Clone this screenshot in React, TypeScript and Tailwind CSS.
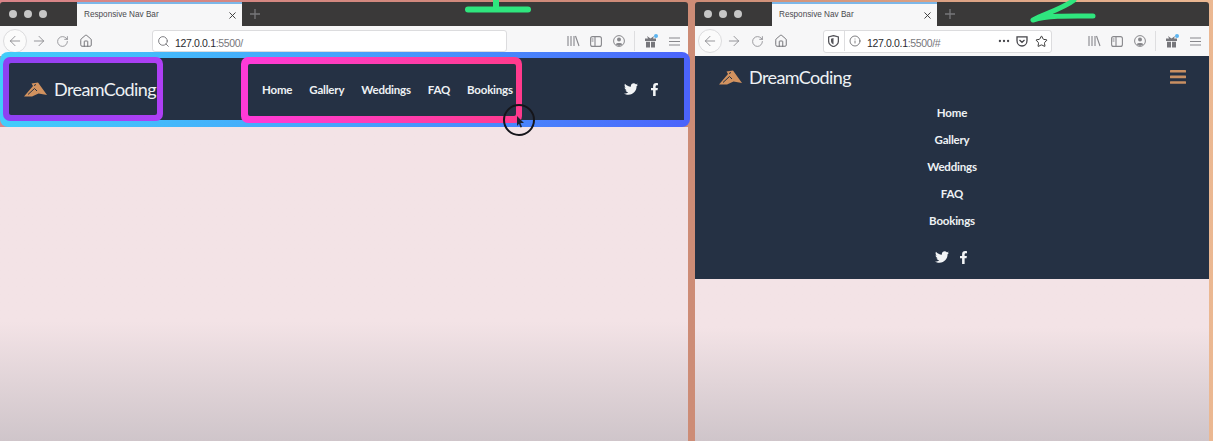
import { FaFacebookF, FaTwitter } from 'react-icons/fa';
import { ArrowLeft, ArrowRight, Home, Info, MoreHorizontal, RotateCw, Search, Star, X } from 'lucide-react';

const links = ['Home', 'Gallery', 'Weddings', 'FAQ', 'Bookings'];

const Logo = () => (
  <svg width="23" height="15" viewBox="0 0 23 15" className="shrink-0">
    <path d="M0 14.5 L9 4 L7.5 1.5 L14 0.5 L23 13 L14.5 11.5 L8 14.5 Z" fill="#d2925f" />
    <path d="M4 12.5 L10.5 6.5 L13 9 M10 3.5 L12 2.5" fill="none" stroke="#253144" strokeWidth="1" />
  </svg>
);

const TabStrip = () => (
  <div className="flex h-6 shrink-0 items-stretch rounded-t-[3px] bg-[#3a3939]">
    <div className="flex w-[77px] items-center gap-[7px] pl-[9px]">
      <span className="h-2 w-2 rounded-full bg-[#c6c6c6]" />
      <span className="h-2 w-2 rounded-full bg-[#c6c6c6]" />
      <span className="h-2 w-2 rounded-full bg-[#c6c6c6]" />
    </div>
    <div className="flex w-[165px] items-center justify-between border-t-2 border-[#7db7e8] bg-[#f7f7f8] pl-[7px] pr-[4px] font-['Liberation_Sans',sans-serif] text-[8.2px] text-[#4a4a4f]">
      <span>Responsive Nav Bar</span>
      <X size={11} strokeWidth={2} className="text-[#333]" />
    </div>
    <div className="flex items-center pl-[8px] text-[#77777a]">
      <svg width="10" height="10" viewBox="0 0 10 10" stroke="currentColor" strokeWidth="1.3">
        <path d="M5 0V10M0 5H10" />
      </svg>
    </div>
  </div>
);

const NavButtons = () => (
  <div className="flex items-center text-[#88888c]">
    <div className="ml-[3px] flex h-[24px] w-[24px] items-center justify-center rounded-full border border-[#dcdcde] bg-[#fbfbfb]">
      <ArrowLeft size={16} strokeWidth={1.3} />
    </div>
    <ArrowRight size={16} strokeWidth={1.3} className="ml-[4px]" />
    <RotateCw size={13} strokeWidth={1.5} className="ml-[9px]" />
    <Home size={14} strokeWidth={1.5} className="ml-[10px] text-[#66666a]" />
  </div>
);

const RightTools = () => (
  <div className="ml-auto flex items-center text-[#88888c]">
    <svg width="13" height="12" viewBox="0 0 13 12" fill="none" stroke="currentColor" strokeWidth="1.1">
      <path d="M1 1V11M4 1V11M7 1V11M8.5 1L12 11" />
    </svg>
    <svg width="12" height="11" viewBox="0 0 12 11" fill="none" stroke="currentColor" strokeWidth="1.1" className="ml-[10px]">
      <rect x="0.6" y="0.6" width="10.8" height="9.8" rx="2" />
      <path d="M5 1V10M1.5 3H3.5M1.5 5H3.5" />
    </svg>
    <svg width="12" height="12" viewBox="0 0 12 12" className="ml-[11px]">
      <circle cx="6" cy="6" r="5.4" fill="none" stroke="currentColor" strokeWidth="1" />
      <circle cx="6" cy="4.6" r="2" fill="currentColor" />
      <path d="M2.6 9.4C3.6 7.6 8.4 7.6 9.4 9.4L6 11Z" fill="currentColor" />
    </svg>
    <span className="ml-[9px] h-[20px] w-px bg-[#dedee0]" />
    <div className="relative ml-[9px]">
      <svg width="13" height="13" viewBox="0 0 13 13" fill="#77777c">
        <path d="M1 3.5H12V6H1ZM2 6.8H6V12.5H2ZM7 6.8H11V12.5H7ZM3 1L6.5 3.4L4 3.4ZM10 1L6.5 3.4L9 3.4Z" />
      </svg>
      <span className="absolute -right-[1px] -top-[1px] h-[4px] w-[4px] rounded-full bg-[#5cb4f0]" />
    </div>
    <svg width="11" height="9" viewBox="0 0 11 9" stroke="currentColor" strokeWidth="1.1" className="ml-[12px] mr-[8px]">
      <path d="M0 1H11M0 4.5H11M0 8H11" />
    </svg>
  </div>
);

const Url = ({ hash }: { hash?: boolean }) => (
  <span className="font-['Liberation_Sans',sans-serif] text-[10.5px] tracking-[-0.35px] text-[#2b2b30]">
    127.0.0.1<span className="text-[#77777c]">:5500/{hash ? '#' : ''}</span>
  </span>
);

const Twitter = () => <FaTwitter size={14} className="text-[#f2f4f6]" />;
const Facebook = () => <FaFacebookF size={13} className="text-[#f2f4f6]" />;

export default function App() {
  return (
    <div
      className="flex h-[441px] w-[1213px] overflow-hidden bg-gradient-to-r from-[#d98488] via-[#cd8c76] via-[57%] to-[#ebb892] pt-[2px] text-[#eef1f4]"
      style={{ fontFamily: 'Lato, sans-serif' }}
    >
      {/* Left window */}
      <div className="relative flex w-[688px] shrink-0 flex-col">
        <TabStrip />
        <div className="flex h-[30px] shrink-0 items-center bg-[#f7f7f8]">
          <NavButtons />
          <div className="ml-[59px] flex h-[22px] w-[355px] items-center rounded-[3px] border border-[#dcdcde] bg-white pl-[4px]">
            <Search size={13} strokeWidth={1.6} className="text-[#6d6d72]" />
            <span className="ml-[5px]"><Url /></span>
          </div>
          <RightTools />
        </div>

        {/* Nav with annotation frames */}
        <div className="relative z-10 -mt-[4px] w-[690px] shrink-0 rounded-[8px] bg-gradient-to-r from-[#42cdfa] via-[#46a2fb] to-[#4b63fb] pb-[7px] pl-[7px] pr-[6px] pt-[6px]">
          <div className="flex h-[62px] items-start bg-[#253144]">
            <div className="-ml-[4px] -mt-[1px] h-[64px] w-[160px] shrink-0 rounded-[7px] bg-gradient-to-r from-[#8d41f2] to-[#ae3ff5] p-[6px]">
              <div className="flex h-full items-center gap-[7px] rounded-[2px] bg-[#253144] pl-[15px]">
                <Logo />
                <span className="text-[18px] leading-none tracking-[-0.6px]">DreamCoding</span>
              </div>
            </div>
            <div className="-mt-[1px] ml-[78px] h-[66px] w-[281px] shrink-0 rounded-[7px] bg-gradient-to-r from-[#ff3ad8] to-[#ff3a8c] p-[7px] pr-[6px]">
              <div className="flex h-full items-center gap-[17px] rounded-[2px] bg-[#253144] pl-[14px] text-[11.5px] font-bold tracking-[-0.2px]">
                {links.map(link => (
                  <span key={link}>{link}</span>
                ))}
              </div>
            </div>
            <div className="ml-[102px] flex h-[62px] items-center gap-[10px]">
              <Twitter />
              <Facebook />
            </div>
          </div>
        </div>

        <div className="flex-1 bg-gradient-to-b from-[#f3e3e6] from-[62%] to-[#cfc5ca]" />

        {/* Cursor highlight */}
        <div className="absolute left-[503px] top-[102px] z-20 flex h-[32px] w-[32px] items-center justify-center rounded-full border-2 border-[#15151a]">
          <svg width="9" height="12" viewBox="0 0 9 12" className="ml-[3px] mt-[3px]">
            <path d="M1 0L8 7H4.5L6 11L4.5 11.5L3 7.8L1 10Z" fill="#1c2330" />
          </svg>
        </div>

        {/* Hand-drawn mark */}
        <svg width="70" height="16" viewBox="0 0 70 16" className="absolute left-[463px] -top-[2px] z-20" fill="none" stroke="#2fe67e" strokeLinecap="round" strokeWidth="6">
          <path d="M33 0V9M5 9.5H65" />
        </svg>
      </div>

      {/* Right window */}
      <div className="relative ml-[7px] flex w-[514px] shrink-0 flex-col">
        <TabStrip />
        <div className="flex h-[30px] shrink-0 items-center bg-[#f7f7f8]">
          <NavButtons />
          <div className="ml-[35px] flex h-[23px] w-[229px] items-center rounded-[3px] border border-[#dcdcde] bg-white pl-[4px] text-[#55555a]">
            <svg width="11" height="12" viewBox="0 0 11 12">
              <path d="M5.5 0.6L10.4 2V6C10.4 9 8 10.8 5.5 11.6C3 10.8 0.6 9 0.6 6V2Z" fill="none" stroke="currentColor" strokeWidth="1.3" />
              <path d="M5.5 3V9.5C3.8 8.8 3 7.5 3 6V3.8Z" fill="currentColor" />
            </svg>
            <span className="ml-[5px] h-[20px] w-px bg-[#dedee0]" />
            <Info size={12} strokeWidth={1.5} className="ml-[4px]" />
            <span className="ml-[6px]"><Url hash /></span>
            <div className="ml-auto flex items-center pr-[3px] text-[#45454a]">
              <MoreHorizontal size={14} strokeWidth={2} />
              <svg width="12" height="11" viewBox="0 0 12 11" fill="none" stroke="currentColor" strokeWidth="1.3" className="ml-[5px]">
                <path d="M1 0.8H11V4.5C11 8 8.5 10 6 10C3.5 10 1 8 1 4.5ZM3.5 4L6 6.3L8.5 4" />
              </svg>
              <Star size={13} strokeWidth={1.8} className="ml-[7px] text-[#333]" />
            </div>
          </div>
          <RightTools />
        </div>

        <div className="flex h-[223px] shrink-0 flex-col items-center bg-[#253144]">
          <div className="flex h-[42px] w-full shrink-0 items-center justify-between pl-[24px] pr-[23px]">
            <div className="flex items-center gap-[7px]">
              <Logo />
              <span className="text-[18px] leading-none tracking-[-0.6px]">DreamCoding</span>
            </div>
            <svg width="16" height="14" viewBox="0 0 16 14" fill="#c98f62">
              <rect width="16" height="2.6" rx="0.5" />
              <rect y="5.6" width="16" height="2.6" rx="0.5" />
              <rect y="11.2" width="16" height="2.6" rx="0.5" />
            </svg>
          </div>
          <div className="mt-[6px] flex flex-col items-center gap-[10px] text-[11.5px] font-bold leading-[17px] tracking-[-0.2px]">
            {links.map(link => (
              <span key={link}>{link}</span>
            ))}
          </div>
          <div className="mt-[21px] flex items-center gap-[8px]">
            <Twitter />
            <Facebook />
          </div>
        </div>

        <div className="flex-1 bg-gradient-to-b from-[#f3e3e6] from-[30%] to-[#cfc5ca]" />

        {/* Hand-drawn mark */}
        <svg width="70" height="24" viewBox="0 0 70 24" className="absolute left-[333px] -top-[2px] z-20" fill="none" stroke="#2fe67e" strokeLinecap="round" strokeLinejoin="round" strokeWidth="5">
          <path d="M46 0C36 8 16 14 5 20C22 15 45 16 65 16" />
        </svg>
      </div>
    </div>
  );
}
